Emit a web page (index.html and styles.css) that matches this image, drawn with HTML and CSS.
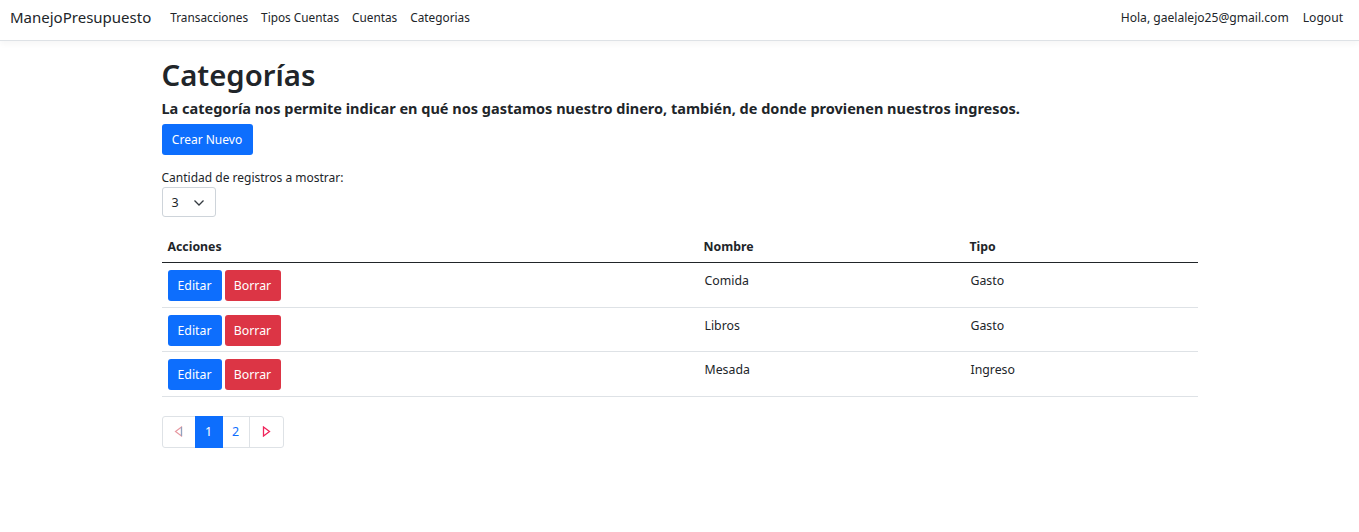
FILE: index.html
```html
<!DOCTYPE html>
<html lang="es">
<head>
<meta charset="utf-8">
<title>Categorías - ManejoPresupuesto</title>
<link rel="stylesheet" href="styles.css">
</head>
<body>
<header class="navbar">
  <div class="nav-left">
    <a class="brand" href="#">ManejoPresupuesto</a>
    <nav class="nav-links">
      <a href="#">Transacciones</a>
      <a href="#">Tipos Cuentas</a>
      <a href="#">Cuentas</a>
      <a href="#">Categorias</a>
    </nav>
  </div>
  <div class="nav-right">
    <span class="greeting">Hola, gaelalejo25@gmail.com</span>
    <a href="#">Logout</a>
  </div>
</header>
<main class="container">
  <h1 class="title">Categorías</h1>
  <h5 class="subtitle">La categoría nos permite indicar en qué nos gastamos nuestro dinero, también, de donde provienen nuestros ingresos.</h5>
  <a class="btn btn-primary btn-new" href="#">Crear Nuevo</a>
  <div class="records">
    <label class="records-label">Cantidad de registros a mostrar:</label>
    <div class="select">
      <span>3</span>
      <svg width="12" height="8" viewBox="0 0 12 8"><path d="M1.5 1.5 L6 6 L10.5 1.5" fill="none" stroke="#343a40" stroke-width="1.3"/></svg>
    </div>
  </div>
  <table class="table">
    <thead>
      <tr><th class="col-acc">Acciones</th><th class="col-nom">Nombre</th><th>Tipo</th></tr>
    </thead>
    <tbody>
      <tr>
        <td><div class="actions"><a class="btn btn-primary btn-sm" href="#">Editar</a><a class="btn btn-danger btn-sm" href="#">Borrar</a></div></td>
        <td>Comida</td><td>Gasto</td>
      </tr>
      <tr>
        <td><div class="actions"><a class="btn btn-primary btn-sm" href="#">Editar</a><a class="btn btn-danger btn-sm" href="#">Borrar</a></div></td>
        <td>Libros</td><td>Gasto</td>
      </tr>
      <tr>
        <td><div class="actions"><a class="btn btn-primary btn-sm" href="#">Editar</a><a class="btn btn-danger btn-sm" href="#">Borrar</a></div></td>
        <td>Mesada</td><td>Ingreso</td>
      </tr>
    </tbody>
  </table>
  <ul class="pagination">
    <li class="page prev"><svg width="9" height="11" viewBox="0 0 9 11"><path d="M7.5 1 L1.5 5.5 L7.5 10 Z" fill="none" stroke="#e89aa2" stroke-width="1.2"/><path d="M7.5 1 L7.5 10" stroke="#8fa3c0" stroke-width="1.2"/></svg></li>
    <li class="page active">1</li>
    <li class="page">2</li>
    <li class="page next"><svg width="9" height="11" viewBox="0 0 9 11"><path d="M1.5 1 L7.5 5.5 L1.5 10 Z" fill="none" stroke="#f0245a" stroke-width="1.3"/></svg></li>
  </ul>
</main>
</body>
</html>
```
FILE: styles.css
```css
* { box-sizing: border-box; }
html, body { margin: 0; padding: 0; }
body {
  font-family: "Noto Sans", "Open Sans", sans-serif;
  color: #212529;
  background: #fff;
  font-size: 12.5px;
}
a { text-decoration: none; color: inherit; }

.navbar {
  height: 41px;
  display: flex;
  align-items: center;
  justify-content: space-between;
  padding: 0 16px 0 10px;
  border-bottom: 1px solid #dee2e6;
  box-shadow: 0 3px 6px rgba(0,0,0,0.04);
}
.nav-left { display: flex; align-items: center; }
.brand { font-size: 15px; color: #212529; margin-right: 19px; margin-top: -6px; }
.nav-links { display: flex; gap: 13px; font-size: 11.8px; margin-top: -6px; }
.nav-right { display: flex; align-items: center; gap: 14px; font-size: 12.1px; margin-top: -6px; }

.container { width: 1036px; margin: 0 auto; padding-top: 16px; }
.title { font-size: 29.3px; font-weight: 600; margin: 0; line-height: 37px; }
.subtitle { font-size: 14.5px; font-weight: 700; margin: 5px 0 6px; line-height: 19px; }

.btn {
  display: inline-flex;
  align-items: center;
  justify-content: center;
  color: #fff;
  border-radius: 3px;
  font-size: 12px;
}
.btn-primary { background: #0d6efd; }
.btn-danger { background: #dc3545; }
.btn-new { width: 91px; height: 31px; }

.records { margin-top: 14px; }
.records-label { display: block; font-size: 12px; line-height: 17px; }
.select {
  margin-top: 1px;
  width: 54px;
  height: 30px;
  border: 1px solid #ced4da;
  border-radius: 3px;
  display: flex;
  align-items: center;
  justify-content: space-between;
  padding: 0 10px 0 9px;
  font-size: 12.5px;
}
.select svg { margin-top: 1px; }

.table { width: 100%; border-collapse: collapse; margin-top: 15px; font-size: 12.3px; }
.table th {
  text-align: left;
  font-weight: 700;
  padding: 5px 6px 6px;
  height: 30px;
  border-bottom: 1px solid #212529;
  vertical-align: middle;
}
.col-acc { width: 536px; }
.col-nom { width: 266px; }
.table td {
  padding: 9px 7px 8px;
  border-bottom: 1px solid #dee2e6;
  vertical-align: top;
  height: 45px;
}
.table tbody tr:nth-child(2) td { height: 44px; }
.table td:first-child { padding: 7px 6px 6px; }
.table tbody tr:nth-child(2) td:first-child { padding-bottom: 5px; }
.actions { display: flex; gap: 3px; }
.btn-sm { height: 31px; padding: 0 10px; font-size: 12.3px; }
.btn-sm.btn-primary { width: 54px; }
.btn-sm.btn-danger { width: 56px; }

.pagination {
  list-style: none;
  padding: 0;
  margin: 19px 0 0;
  display: flex;
}
.page {
  height: 32px;
  width: 28px;
  display: flex;
  align-items: center;
  justify-content: center;
  border: 1px solid #dee2e6;
  margin-left: -1px;
  color: #0d6efd;
  font-size: 12.5px;
}
.page.prev { width: 34px; margin-left: 0; border-radius: 3px 0 0 3px; }
.page.next { width: 35px; border-radius: 0 3px 3px 0; }
.page.active { background: #0d6efd; border-color: #0d6efd; color: #fff; position: relative; }
```
